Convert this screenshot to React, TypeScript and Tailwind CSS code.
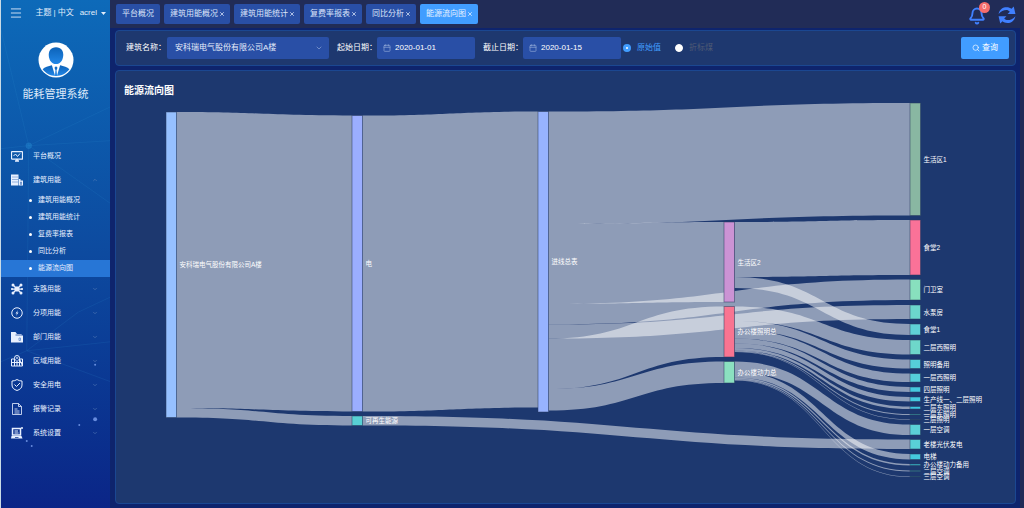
import { useState } from "react"
import type { ReactNode } from "react"
import { Bell, Calendar, ChevronDown, ChevronUp, Menu, Search, X } from "lucide-react"

type SankeyNode = {
  name: string
  x: number
  y: number
  h: number
  color: string
}

const NODE_WIDTH = 21

const nodes: SankeyNode[] = [
  { name: "安科瑞电气股份有限公司A楼", x: 84, y: 26, h: 611, color: "#96c0ff" },
  { name: "电", x: 456, y: 33, h: 592, color: "#9baeff" },
  { name: "可再生能源", x: 456, y: 634, h: 19, color: "#58d0d4" },
  { name: "进线总表", x: 828, y: 25, h: 601, color: "#97b3ff" },
  { name: "生活区2", x: 1200, y: 246, h: 160, color: "#cb93d4" },
  { name: "办公楼照明总", x: 1200, y: 415, h: 101, color: "#f97491" },
  { name: "办公楼动力总", x: 1200, y: 525, h: 43, color: "#8be0c0" },
  { name: "生活区1", x: 1572, y: 8, h: 225, color: "#89b7a2" },
  { name: "食堂2", x: 1572, y: 242, h: 110, color: "#fa7298" },
  { name: "门卫室", x: 1572, y: 361, h: 41, color: "#88e0be" },
  { name: "水泵房", x: 1572, y: 412, h: 28, color: "#6cd6cc" },
  { name: "食堂1", x: 1572, y: 450, h: 22, color: "#5fd0d6" },
  { name: "二层西照明", x: 1572, y: 482, h: 29, color: "#6ed7ca" },
  { name: "照明备用", x: 1572, y: 521, h: 18, color: "#56cfd8" },
  { name: "一层西照明", x: 1572, y: 549, h: 17, color: "#55ced9" },
  { name: "四层照明", x: 1572, y: 576, h: 10, color: "#44c9de" },
  { name: "生产线一、二层照明", x: 1572, y: 596, h: 9, color: "#44c9de" },
  { name: "二层东照明", x: 1572, y: 615, h: 5, color: "#3cc6e0" },
  { name: "一层东照明", x: 1572, y: 630, h: 2, color: "#38a8b0" },
  { name: "三层照明", x: 1572, y: 641, h: 1, color: "#2c5c78" },
  { name: "一层空调", x: 1572, y: 651, h: 21, color: "#5bd0d6" },
  { name: "老楼光伏发电", x: 1572, y: 681, h: 19, color: "#59d0d7" },
  { name: "电梯", x: 1572, y: 710, h: 11, color: "#45c9dd" },
  { name: "办公楼动力备用", x: 1572, y: 730, h: 3, color: "#35b4c8" },
  { name: "二层空调", x: 1572, y: 743, h: 2, color: "#35a4b4" },
  { name: "三层空调", x: 1572, y: 755, h: 1, color: "#2f8088" },
]

// source, target, thickness
const links: [string, string, number][] = [
  ["安科瑞电气股份有限公司A楼", "电", 592],
  ["安科瑞电气股份有限公司A楼", "可再生能源", 19],
  ["电", "进线总表", 592],
  ["进线总表", "生活区1", 225],
  ["进线总表", "生活区2", 160],
  ["进线总表", "门卫室", 41],
  ["进线总表", "水泵房", 28],
  ["进线总表", "办公楼照明总", 101],
  ["进线总表", "办公楼动力总", 43],
  ["生活区2", "食堂2", 110],
  ["生活区2", "食堂1", 22],
  ["办公楼照明总", "二层西照明", 29],
  ["办公楼照明总", "照明备用", 18],
  ["办公楼照明总", "一层西照明", 17],
  ["办公楼照明总", "四层照明", 10],
  ["办公楼照明总", "生产线一、二层照明", 9],
  ["办公楼照明总", "二层东照明", 5],
  ["办公楼照明总", "一层东照明", 2],
  ["办公楼照明总", "三层照明", 1],
  ["办公楼动力总", "一层空调", 21],
  ["办公楼动力总", "电梯", 11],
  ["办公楼动力总", "办公楼动力备用", 3],
  ["办公楼动力总", "二层空调", 2],
  ["办公楼动力总", "三层空调", 1],
  ["可再生能源", "老楼光伏发电", 19],
]

// Stack the outgoing links of every node from its top edge
const buildLinks = () => {
  const used: Record<string, number> = {}

  return links.map(([from, to, size]) => {
    const s = nodes.find(n => n.name === from)!
    const t = nodes.find(n => n.name === to)!
    const y0 = s.y + (used[from] || 0)
    used[from] = (used[from] || 0) + size

    const x0 = s.x + NODE_WIDTH
    const x1 = t.x
    const mid = (x0 + x1) / 2
    const y1 = t.y

    return `M${x0} ${y0}C${mid} ${y0} ${mid} ${y1} ${x1} ${y1}V${y1 + size}C${mid} ${y1 + size} ${mid} ${y0 + size} ${x0} ${y0 + size}Z`
  })
}

function SankeyChart() {
  return (
    <svg viewBox="0 0 1766 800" className="block w-full h-auto" role="img" aria-label="能源流向图">
      {buildLinks().map((d, i) => (
        <path key={i} d={d} fill="#fff" fillOpacity="0.5" />
      ))}
      {nodes.map(n => (
        <rect
          key={n.name}
          x={n.x}
          y={n.y}
          width={NODE_WIDTH}
          height={n.h}
          fill={n.color}
          stroke="#273a5c"
          strokeOpacity="0.5"
          strokeWidth="2"
        />
      ))}
      {nodes.map(n => (
        <text
          key={n.name}
          x={n.x + NODE_WIDTH + 6}
          y={n.y + n.h / 2}
          dominantBaseline="central"
          fontSize="13"
          fill="#fff"
        >
          {n.name}
        </text>
      ))}
    </svg>
  )
}

function Icon({ children }: { children: ReactNode }) {
  return (
    <svg viewBox="0 0 24 24" className="size-3 shrink-0" fill="none" stroke="currentColor" strokeWidth="2">
      {children}
    </svg>
  )
}

const menu = [
  {
    label: "平台概况",
    icon: (
      <Icon>
        <rect x="1" y="3" width="22" height="15" rx="1" strokeWidth="2.5" />
        <path d="M5 12l4-4 4 5 5-6" />
        <path d="M8 22h8M12 18v4" strokeWidth="3" />
      </Icon>
    ),
  },
  {
    label: "建筑用能",
    open: true,
    children: ["建筑用能概况", "建筑用能统计", "复费率报表", "同比分析", "能源流向图"],
    icon: (
      <Icon>
        <path d="M0 1h15v22H0z" fill="currentColor" stroke="none" />
        <path d="M3 6h10M3 11h10M3 16h10" stroke="#0f4da4" strokeWidth="1.5" strokeDasharray="2 2" />
        <path d="M16 10h3v3h5v10h-8z" fill="currentColor" stroke="none" />
        <path d="M19 16h2v5h-2z" stroke="#0f4da4" strokeWidth="1" />
      </Icon>
    ),
  },
  {
    label: "支路用能",
    icon: (
      <Icon>
        <path d="M4 4l16 16M20 4L4 20M1 12h22" strokeWidth="2.5" />
        <rect x="8" y="8" width="8" height="8" rx="2" fill="currentColor" />
        <g fill="currentColor" stroke="none">
          <circle cx="4" cy="4" r="3" />
          <circle cx="20" cy="4" r="3" />
          <circle cx="4" cy="20" r="3" />
          <circle cx="20" cy="20" r="3" />
          <circle cx="2" cy="12" r="2" />
          <circle cx="22" cy="12" r="2" />
        </g>
      </Icon>
    ),
  },
  {
    label: "分项用能",
    icon: (
      <Icon>
        <circle cx="12" cy="12" r="10.5" />
        <path d="M14 6l-5 7h3l-2 5 5-7h-3z" fill="currentColor" stroke="none" />
      </Icon>
    ),
  },
  {
    label: "部门用能",
    icon: (
      <Icon>
        <path d="M0 2h9l3 4h9v3h3v14H0z" fill="currentColor" stroke="none" />
        <path d="M9 8h12" stroke="#0d3f9a" strokeWidth="1.5" />
        <path d="M16 14h3v5h-3z" stroke="#7f9fd6" />
      </Icon>
    ),
  },
  {
    label: "区域用能",
    icon: (
      <Icon>
        <path d="M1 22V8h6M17 8h6v14zM1 22h22M7 8v14M17 8v14M12 13v9M1 15h22" />
        <path d="M12 13C9 10 7 8 7 6a5 5 0 0 1 10 0c0 2-2 4-5 7z" />
        <circle cx="12" cy="6" r="1" />
      </Icon>
    ),
  },
  {
    label: "安全用电",
    icon: (
      <Icon>
        <path d="M12 1c3 2 6 3 10 3v8c0 6-4 9-10 11C6 21 2 18 2 12V4c4 0 7-1 10-3z" />
        <path d="M7 11l4 4 7-7" />
      </Icon>
    ),
  },
  {
    label: "报警记录",
    icon: (
      <Icon>
        <path d="M3 1h12l6 6v16H3zM15 1v6h6M7 12h6M7 16h10M7 20h10" strokeOpacity="0.8" />
      </Icon>
    ),
  },
  {
    label: "系统设置",
    icon: (
      <Icon>
        <path d="M3 3h16v13H3z" strokeWidth="3" />
        <path d="M7 12h8M7 8h7" />
        <path d="M1 18h20l2 5H0z" fill="currentColor" stroke="none" />
        <path d="M8 21h7" stroke="#0b308f" strokeWidth="1.5" />
        <circle cx="22" cy="2" r="2" fill="currentColor" stroke="none" />
      </Icon>
    ),
  },
]

function Sidebar() {
  return (
    <aside className="relative w-[110px] shrink-0 border-l border-[#c9dbe6] bg-linear-to-b from-[#0d6ab9] via-[#0d4a9f] to-[#0b2587]">

      {/* Background lines and dots */}
      <svg viewBox="0 0 110 508" className="absolute inset-x-0 top-0 w-full" fill="none" stroke="#3ba0e0" strokeOpacity="0.12">
        <path d="M0 30L28 147L110 108M28 147L110 142M28 147L0 150M28 147L110 205M28 147L26 354M0 365L26 354L110 345M26 354L110 385M26 354L78 315L110 300" />
        <circle cx="28" cy="147" r="3" fill="#2d9be0" fillOpacity="0.3" />
        <g fill="#8fb2ff" fillOpacity="0.7" stroke="none">
          <circle cx="95" cy="423" r="2" />
          <circle cx="79" cy="429" r="1" />
          <circle cx="95" cy="368" r="1" />
          <circle cx="31" cy="450" r="1" />
          <circle cx="26" cy="445" r="1" />
        </g>
      </svg>

      <div className="relative flex h-[26px] items-center pl-2 pr-1 text-[8px] whitespace-nowrap text-[#e2edfa]">
        <button aria-label="菜单">
          <Menu className="size-3.5" strokeWidth={1.5} />
        </button>
        <div className="ml-auto flex items-center gap-0.5">
          <button>主题</button>
          <span>|</span>
          <button>中文</button>
        </div>
        <button className="ml-1.5 flex items-center gap-1">
          acrel
          <svg viewBox="0 0 10 6" className="w-[5px] shrink-0" fill="currentColor">
            <path d="M0 0h10L5 6z" />
          </svg>
        </button>
      </div>

      <div className="relative flex flex-col items-center pt-4">
        <svg viewBox="0 0 70 70" className="size-9">
          <defs>
            <linearGradient id="avatar" x1="0" y1="0" x2="0" y2="1">
              <stop offset="0" stopColor="#0c62b8" />
              <stop offset="1" stopColor="#2388e8" />
            </linearGradient>
          </defs>
          <circle cx="35" cy="35" r="34" fill="#fff" />
          <path d="M35 10c10 0 15 7 14 17-1 9-6 16-14 16s-13-7-14-16c-1-10 4-17 14-17z" fill="url(#avatar)" />
          <path d="M9 53c4-5 11-6 18-8l6 20 1-10-2-5 3-3 3 3-2 5 1 10 6-20c7 2 14 3 18 8-6 8-15 13-26 13S15 61 9 53z" fill="url(#avatar)" />
        </svg>
        <h1 className="mt-2 text-[11px] leading-4 text-[#dfeafa]">能耗管理系统</h1>
      </div>

      <nav className="relative mt-[42px] text-[7px] text-[#e8f0ff]">
        {menu.map(item => (
          <div key={item.label}>
            <a href="#" className="flex h-6 items-center pl-2.5 pr-3">
              {item.icon}
              <span className="ml-2.5 flex-1">{item.label}</span>
              {item.label !== "平台概况" && (
                item.open
                  ? <ChevronUp className="size-1.5 text-[#6286bd]" />
                  : <ChevronDown className="size-1.5 text-[#6286bd]" />
              )}
            </a>
            {item.children?.map(child => (
              <a
                key={child}
                href="#"
                className={`flex h-[17px] items-center gap-1.5 pl-7 ${child === "能源流向图" ? "bg-[#2776d6]" : ""}`}
              >
                <span className="size-[3px] rounded-full bg-white" />
                {child}
              </a>
            ))}
          </div>
        ))}
      </nav>
    </aside>
  )
}

const tabs = ["平台概况", "建筑用能概况", "建筑用能统计", "复费率报表", "同比分析", "能源流向图"]

function TopBar() {
  return (
    <header className="flex h-7 items-center gap-1 bg-[#212c57] pl-1.5 pr-2">
      {tabs.map((tab, i) => (
        <button
          key={tab}
          className={`flex h-5 items-center gap-px rounded-xs text-[8px] whitespace-nowrap ${i === 0 ? "px-1.5" : "pl-1.5 pr-[5px]"} ${tab === "能源流向图" ? "bg-[#419dff] text-[#e4f1ff]" : "bg-[#294fa6] text-[#dbe5fa]"}`}
        >
          {tab}
          {i > 0 && <X className="size-1.5" strokeWidth={3} />}
        </button>
      ))}

      <div className="ml-auto flex items-center gap-3">
        <button className="relative pt-1" aria-label="通知">
          <Bell className="size-[18px] text-[#4080ff]" strokeWidth={2.5} />
          <span className="absolute -top-px -right-1 flex size-[11px] items-center justify-center rounded-full bg-[#f56c6c] text-[7px] text-white">0</span>
        </button>
        <button className="pt-0.5" aria-label="刷新">
          <svg viewBox="0 0 32 32" className="size-[18px] text-[#4080ff]" fill="currentColor">
            <path d="M1 14C3 5 9 2 15 2c4 0 7 1 9 3l4-4 3 13H17l4-4c-2-2-4-3-6-3-5 0-10 2-14 7z" />
            <path d="M31 18c-2 9-8 12-14 12-4 0-7-1-9-3l-4 4-3-13h14l-4 4c2 2 4 3 6 3 5 0 10-2 14-7z" />
          </svg>
        </button>
      </div>
    </header>
  )
}

function DateField({ id, label, value, onChange }: { id: string; label: string; value: string; onChange: (v: string) => void }) {
  return (
    <div className="flex items-center">
      <label htmlFor={id} className="w-10 whitespace-nowrap">{label}：</label>
      <div className="flex h-[22px] w-[98px] items-center gap-1 rounded-xs bg-[#294fa6] px-1.5">
        <Calendar className="size-2 shrink-0 text-[#93a9d8]" />
        <input
          id={id}
          value={value}
          onChange={e => onChange(e.target.value)}
          className="w-full min-w-0 bg-transparent text-[8px] text-white outline-none"
        />
      </div>
    </div>
  )
}

const radioClass = "size-2 appearance-none rounded-full border border-white bg-white checked:border-3 checked:border-[#419dff]"

function FilterBar() {
  const [start, setStart] = useState("2020-01-01")
  const [end, setEnd] = useState("2020-01-15")
  const [mode, setMode] = useState("raw")

  return (
    <form
      onSubmit={e => e.preventDefault()}
      className="flex h-9 items-center rounded-sm border border-[#1b4791] bg-[#1e386f] pl-2.5 pr-1.5 text-[8px] text-white"
    >
      <label htmlFor="building" className="w-[41px] whitespace-nowrap">建筑名称：</label>
      <div className="relative w-[162px]">
        <select
          id="building"
          className="h-[22px] w-full appearance-none rounded-xs bg-[#294fa6] px-2 text-[8px] text-[#e6edfb] outline-none"
        >
          <option>安科瑞电气股份有限公司A楼</option>
        </select>
        <ChevronDown className="pointer-events-none absolute top-[7px] right-1.5 size-2 text-[#93a9d8]" />
      </div>

      <div className="ml-2 flex gap-2">
        <DateField id="start" label="起始日期" value={start} onChange={setStart} />
        <DateField id="end" label="截止日期" value={end} onChange={setEnd} />
      </div>

      <label className="ml-0.5 flex items-center gap-1.5 text-[#419dff]">
        <input type="radio" name="mode" checked={mode === "raw"} onChange={() => setMode("raw")} className={radioClass} />
        原始值
      </label>
      <label className="ml-3.5 flex items-center gap-1.5 text-[#4f5a74]">
        <input type="radio" name="mode" checked={mode === "coal"} onChange={() => setMode("coal")} className={radioClass} />
        折标煤
      </label>

      <button type="submit" className="ml-auto flex h-[22px] w-12 items-center justify-center gap-0.5 rounded-xs bg-[#419dff]">
        <Search className="size-2" />
        查询
      </button>
    </form>
  )
}

export default function App() {
  return (
    <div className="flex min-h-screen bg-[#0e246d] font-['Liberation_Sans','Noto_Sans_CJK_SC',sans-serif]">
      <Sidebar />

      <div className="flex min-w-0 flex-1 flex-col">
        <TopBar />

        <main className="flex flex-1 flex-col gap-1 border-r-4 border-[#212c57] pt-0.5 pr-1 pb-1 pl-[5px]">
          <FilterBar />

          <section className="flex-1 rounded-sm border border-[#1b4791] bg-[#1d386f] px-2 pt-3">
            <h2 className="text-[10px] leading-4 font-bold text-white">能源流向图</h2>
            <SankeyChart />
          </section>
        </main>
      </div>
    </div>
  )
}
